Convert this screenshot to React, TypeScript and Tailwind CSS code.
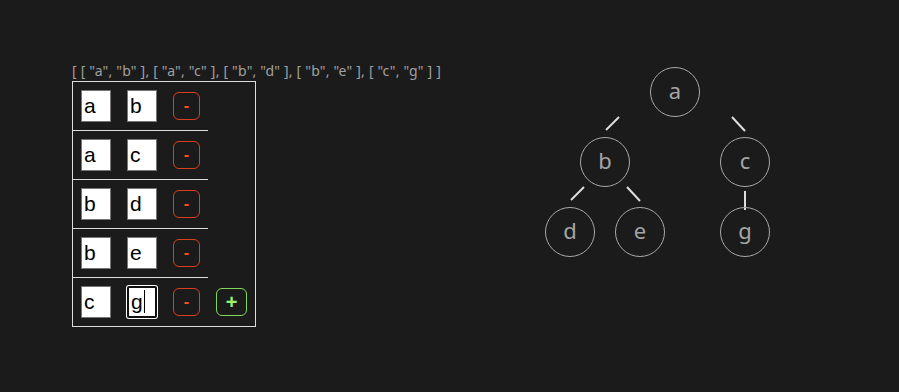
import { useState } from "react";

type Edge = [string, string];

const initialEdges: Edge[] = [
  ["a", "b"],
  ["a", "c"],
  ["b", "d"],
  ["b", "e"],
  ["c", "g"],
];

// node centres inside the tree canvas
const nodes: { id: string; x: number; y: number }[] = [
  { id: "a", x: 132, y: 27 },
  { id: "b", x: 62, y: 97 },
  { id: "c", x: 202, y: 97 },
  { id: "d", x: 27, y: 167 },
  { id: "e", x: 97, y: 167 },
  { id: "g", x: 202, y: 167 },
];

// short connector strokes between parent and child circles
const links = [
  { x1: 76, y1: 52, x2: 63, y2: 65 },
  { x1: 189, y1: 52, x2: 202, y2: 66 },
  { x1: 41, y1: 122, x2: 28, y2: 135 },
  { x1: 84, y1: 122, x2: 97, y2: 136 },
  { x1: 202, y1: 126, x2: 202, y2: 145 },
];

function EdgeRow({
  edge,
  last,
  focused,
}: {
  edge: Edge;
  last: boolean;
  focused: boolean;
}) {
  const inputBase =
    "h-8 w-[30px] bg-white px-[2px] py-0 text-[21px] text-black outline-none [font-family:'Liberation_Sans',Arial,sans-serif]";
  return (
    <div
      className={`flex items-center gap-4 px-2 py-2 ${
        last ? "" : "border-b border-[#dcdcdc]"
      }`}
    >
      <input
        readOnly
        value={edge[0]}
        className={`${inputBase} border border-[#767676]`}
      />
      {focused ? (
        <div className="relative h-8 w-[30px]">
          <input
            readOnly
            value={edge[1]}
            className={`${inputBase} rounded-[2px] border-2 border-[#101010] px-[1px] caret-transparent shadow-[0_0_0_1px_#ffffff]`}
          />
          {/* text caret */}
          <span className="absolute left-[17px] top-[4px] h-[23px] w-px bg-black" />
        </div>
      ) : (
        <input
          readOnly
          value={edge[1]}
          className={`${inputBase} border border-[#767676]`}
        />
      )}
      <button className="flex h-7 w-[27px] items-center justify-center rounded-md border border-[#d8401d] text-[16px] font-bold text-[#ff4b1f] [font-family:'Liberation_Sans',Arial,sans-serif]">
        -
      </button>
      {last && (
        <button className="flex h-7 w-[31px] items-center justify-center rounded-md border border-[#84d65a] text-[20px] font-bold text-[#9cf06c] [font-family:'Liberation_Sans',Arial,sans-serif]">
          +
        </button>
      )}
    </div>
  );
}

export default function App() {
  const [edges] = useState<Edge[]>(initialEdges);
  const json =
    "[ " + edges.map(([p, c]) => `[ "${p}", "${c}" ]`).join(", ") + " ]";

  return (
    <div className="flex h-screen w-full bg-[#1b1b1b] [font-family:'Noto_Sans','Open_Sans',sans-serif]">
      {/* left: edge list editor */}
      <div className="ml-[72px] mt-[61px] flex w-[369px] flex-col items-start">
        <p className="whitespace-nowrap text-[14px] leading-[19px] tracking-[0.2px] text-[#a0a0a0]">
          {json}
        </p>
        <div className="mt-[1px] flex flex-col items-start border border-[#dcdcdc]">
          {edges.map((e, i) => (
            <EdgeRow
              key={i}
              edge={e}
              last={i === edges.length - 1}
              focused={i === edges.length - 1}
            />
          ))}
        </div>
      </div>

      {/* right: rendered tree */}
      <div className="relative ml-[102px] mt-[65px] h-[195px] w-[232px]">
        <svg
          className="absolute inset-0"
          width={232}
          height={195}
          viewBox="0 0 232 195"
        >
          {links.map((l, i) => (
            <line key={i} {...l} stroke="#dedede" strokeWidth={2} />
          ))}
        </svg>
        {nodes.map((n) => (
          <div
            key={n.id}
            className="absolute flex h-[50px] w-[50px] items-center justify-center rounded-full border border-[#a9a9a9] pb-[3px] text-[22px] text-[#a4a4a4]"
            style={{ left: n.x - 25, top: n.y - 25 }}
          >
            {n.id}
          </div>
        ))}
      </div>
    </div>
  );
}
